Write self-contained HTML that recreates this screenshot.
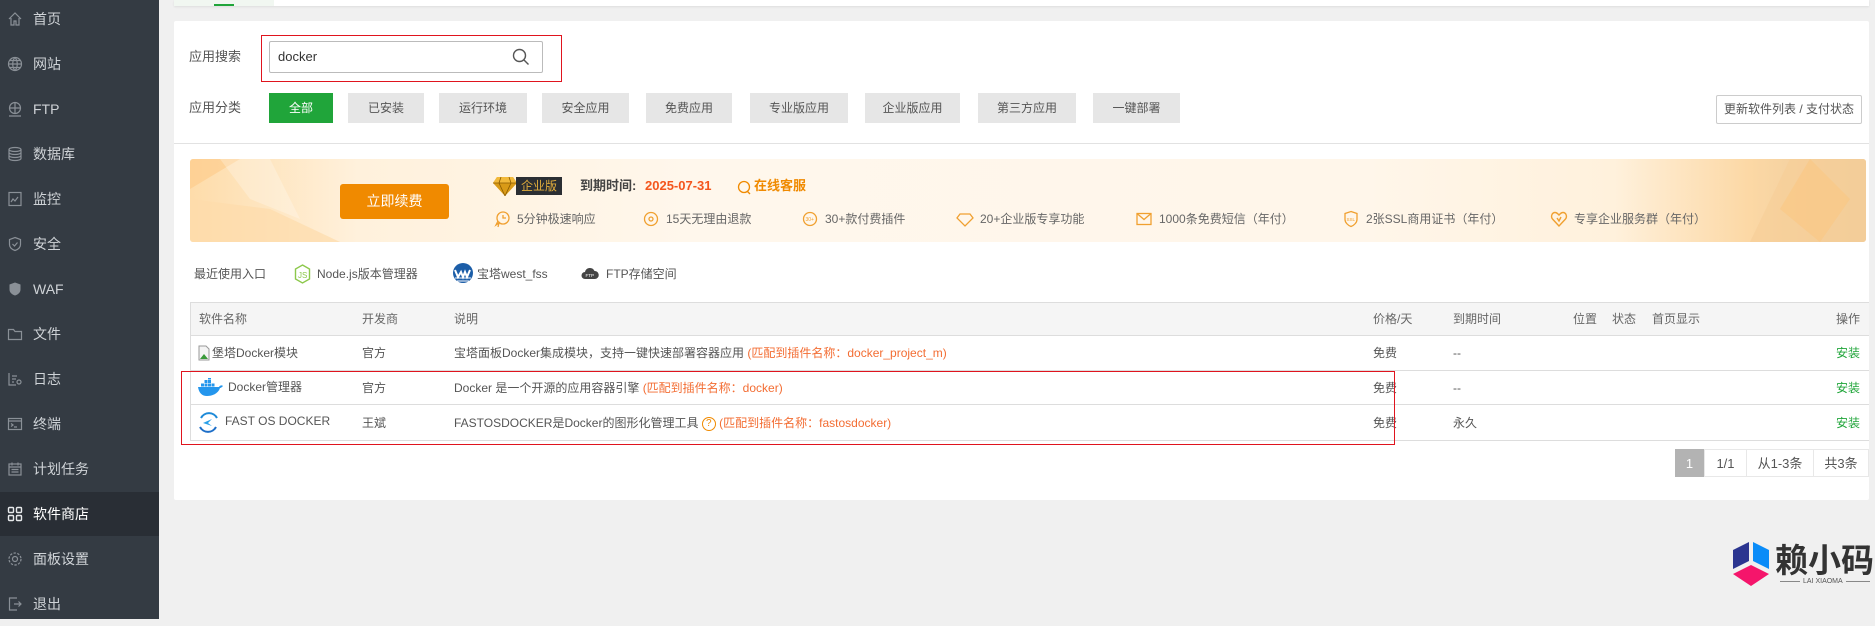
<!DOCTYPE html>
<html><head><meta charset="utf-8"><style>
*{margin:0;padding:0;box-sizing:border-box}
body{width:1875px;height:619px;overflow:hidden;background:#f0f0f0;font-family:"Liberation Sans","Noto Sans CJK SC",sans-serif;font-size:13px;color:#555;position:relative}
.a{position:absolute;white-space:nowrap}
#side{position:absolute;left:0;top:0;width:159px;height:619px;background:#343b43}
.si{position:absolute;left:0;width:159px;height:44px;line-height:44px;color:#cfd3d7;font-size:14px}
.si span{position:absolute;left:33px}
.si svg{position:absolute;left:7px;top:14px}
.si.act{background:#292e35;color:#fff}
.btn{position:absolute;top:93px;height:30px;line-height:30px;background:#e6e6e6;color:#555;text-align:center;font-size:12px}
.th{position:absolute;top:302px;height:34px;line-height:34px;color:#666;font-size:12px}
.row{position:absolute;left:190px;width:1679px;border-bottom:1px solid #ddd;height:35px}
.td{position:absolute;line-height:34px;font-size:12px;color:#555;white-space:nowrap}
.or{color:#f36d33}
.gr{color:#20a53a}
.ft{position:absolute;top:210px;font-size:12px;color:#666;white-space:nowrap;line-height:18px}
.ft svg{position:absolute;left:-24px;top:0}
.pg{position:absolute;top:449px;height:28px;line-height:28px;text-align:center;border:1px solid #e8e8e8;font-size:13px;color:#555;background:#fff}
</style></head><body>
<div id="side">
<div class="si" style="top:-3px"><svg width="16" height="16" viewBox="0 0 16 16" fill="none" stroke="#8a9097" stroke-width="1.2"><path d="M2 8L8 2l6 6M4 7v7h3v-4h2v4h3V7"/></svg><span>首页</span></div>
<div class="si" style="top:42px"><svg width="16" height="16" viewBox="0 0 16 16" fill="none" stroke="#8a9097" stroke-width="1.2"><circle cx="8" cy="8" r="6.5"/><path d="M1.5 8h13M8 1.5c-3 3-3 10 0 13M8 1.5c3 3 3 10 0 13M3 4.5h10M3 11.5h10"/></svg><span>网站</span></div>
<div class="si" style="top:87px"><svg width="16" height="16" viewBox="0 0 16 16" fill="none" stroke="#8a9097" stroke-width="1.2"><circle cx="8" cy="7" r="5.5"/><path d="M2.5 7h11M8 1.5v11M2 15h12"/></svg><span>FTP</span></div>
<div class="si" style="top:132px"><svg width="16" height="16" viewBox="0 0 16 16" fill="none" stroke="#8a9097" stroke-width="1.2"><ellipse cx="8" cy="3.5" rx="6" ry="2"/><path d="M2 3.5v9c0 1.1 2.7 2 6 2s6-.9 6-2v-9M2 6.5c0 1.1 2.7 2 6 2s6-.9 6-2M2 9.5c0 1.1 2.7 2 6 2s6-.9 6-2"/></svg><span>数据库</span></div>
<div class="si" style="top:177px"><svg width="16" height="16" viewBox="0 0 16 16" fill="none" stroke="#8a9097" stroke-width="1.2"><rect x="2" y="1.5" width="12" height="13"/><path d="M4 11l2-3 2 2 3-4"/></svg><span>监控</span></div>
<div class="si" style="top:222px"><svg width="16" height="16" viewBox="0 0 16 16" fill="none" stroke="#8a9097" stroke-width="1.2"><path d="M8 1.5l5.5 2v5c0 3-2.5 5-5.5 6-3-1-5.5-3-5.5-6v-5z M5.5 8l2 2 3-3.5"/></svg><span>安全</span></div>
<div class="si" style="top:267px"><svg width="16" height="16" viewBox="0 0 16 16"><path d="M8 1.5l5.5 2v5c0 3-2.5 5-5.5 6-3-1-5.5-3-5.5-6v-5z" fill="#8a9097"/></svg><span>WAF</span></div>
<div class="si" style="top:312px"><svg width="16" height="16" viewBox="0 0 16 16" fill="none" stroke="#8a9097" stroke-width="1.2"><path d="M1.5 3.5h5l1.5 2h6.5v8h-13z"/></svg><span>文件</span></div>
<div class="si" style="top:357px"><svg width="16" height="16" viewBox="0 0 16 16" fill="none" stroke="#8a9097" stroke-width="1.2"><path d="M2 2v12h7M5 5h5M5 8h4M5 11h2"/><circle cx="12" cy="11" r="2"/></svg><span>日志</span></div>
<div class="si" style="top:402px"><svg width="16" height="16" viewBox="0 0 16 16" fill="none" stroke="#8a9097" stroke-width="1.2"><rect x="1.5" y="2.5" width="13" height="11"/><path d="M1.5 5h13M4 7.5l2 1.5-2 1.5M7 11h3"/></svg><span>终端</span></div>
<div class="si" style="top:447px"><svg width="16" height="16" viewBox="0 0 16 16" fill="none" stroke="#8a9097" stroke-width="1.2"><rect x="2" y="3" width="12" height="11"/><path d="M2 6h12M5 1.5v3M11 1.5v3M4.5 8.5h7M4.5 11h7"/></svg><span>计划任务</span></div>
<div class="si act" style="top:492px"><svg width="16" height="16" viewBox="0 0 16 16" fill="none" stroke="#e8eaec" stroke-width="1.4"><rect x="1.5" y="1.5" width="5" height="5" rx="1"/><rect x="9.5" y="1.5" width="5" height="5" rx="1"/><rect x="1.5" y="9.5" width="5" height="5" rx="1"/><rect x="9.5" y="9.5" width="5" height="5" rx="1"/></svg><span>软件商店</span></div>
<div class="si" style="top:537px"><svg width="16" height="16" viewBox="0 0 16 16" fill="none" stroke="#8a9097" stroke-width="1.2"><circle cx="8" cy="8" r="2.5"/><circle cx="8" cy="8" r="6" stroke-dasharray="2.4 1.4"/></svg><span>面板设置</span></div>
<div class="si" style="top:582px"><svg width="16" height="16" viewBox="0 0 16 16" fill="none" stroke="#8a9097" stroke-width="1.2"><path d="M10 2H2.5v12H10M7 8h7M11.5 5.5L14 8l-2.5 2.5"/></svg><span>退出</span></div>
</div>

<!-- top tab card -->
<div class="a" style="left:174px;top:0;width:1695px;height:6px;background:#fff;box-shadow:0 1px 2px rgba(0,0,0,.08)"></div>
<div class="a" style="left:174px;top:0;width:100px;height:6px;background:#f1f7f1"></div>
<div class="a" style="left:214px;top:4px;width:20px;height:2px;background:#20a53a"></div>

<!-- main card -->
<div class="a" style="left:174px;top:21px;width:1695px;height:479px;background:#fff;border-radius:2px"></div>
<div class="a" style="left:189px;top:47px;font-size:13px;color:#555;line-height:20px">应用搜索</div>
<div class="a" style="left:261px;top:35px;width:301px;height:47px;border:1px solid #e0141e"></div>
<div class="a" style="left:269px;top:41px;width:274px;height:32px;border:1px solid #bbb;border-radius:2px"></div>
<div class="a" style="left:278px;top:47px;font-size:13px;color:#333;line-height:20px">docker</div>
<svg class="a" style="left:512px;top:48px" width="18" height="18" viewBox="0 0 18 18" fill="none" stroke="#555" stroke-width="1.4"><circle cx="7.5" cy="7.5" r="6"/><path d="M12 12l4.5 4.5"/></svg>

<div class="a" style="left:189px;top:98px;font-size:13px;color:#555;line-height:20px">应用分类</div>
<div class="btn" style="left:269px;width:64px;background:#20a53a;color:#fff">全部</div>
<div class="btn" style="left:348px;width:76px">已安装</div>
<div class="btn" style="left:439px;width:88px">运行环境</div>
<div class="btn" style="left:542px;width:87px">安全应用</div>
<div class="btn" style="left:646px;width:86px">免费应用</div>
<div class="btn" style="left:750px;width:98px">专业版应用</div>
<div class="btn" style="left:865px;width:95px">企业版应用</div>
<div class="btn" style="left:978px;width:98px">第三方应用</div>
<div class="btn" style="left:1093px;width:87px">一键部署</div>
<div class="a" style="left:1716px;top:95px;width:146px;height:29px;line-height:27px;border:1px solid #ccc;border-radius:2px;text-align:center;font-size:12px;color:#555">更新软件列表 / 支付状态</div>
<div class="a" style="left:174px;top:143px;width:1695px;height:1px;background:#e2e2e2"></div>

<!-- banner -->
<div class="a" style="left:190px;top:159px;width:1676px;height:83px;border-radius:3px;background:linear-gradient(90deg,#fedcaa 0%,#fff1dc 10%,#fff7ec 30%,#fff6ea 70%,#fff1dc 85%,#fcd8a5 93%,#e9c89a 100%);overflow:hidden">
<svg width="1676" height="83" style="position:absolute;left:0;top:0"><polygon points="0,0 50,0 0,30" fill="#fec987" opacity=".6"/><polygon points="0,40 80,50 150,83 0,83" fill="#fedcab" opacity=".7"/><polygon points="30,0 80,0 110,60 60,40" fill="#fff" opacity=".25"/><polygon points="1600,0 1676,0 1676,83 1560,83" fill="#f7cf98" opacity=".7"/><polygon points="1620,0 1660,40 1630,83 1590,50" fill="#fcc57e" opacity=".5"/></svg>
</div>
<div class="a" style="left:340px;top:184px;width:109px;height:35px;background:#f08a00;border-radius:3px;color:#fff;text-align:center;line-height:35px;font-size:14px">立即续费</div>
<svg class="a" style="left:493px;top:177px" width="24" height="19" viewBox="0 0 24 19"><polygon points="4,0 20,0 24,6 12,19 0,6" fill="#d99a17"/><polygon points="4,0 20,0 24,6 0,6" fill="#f2b93a"/><path d="M0 6h24M8 0l-2 6 6 13 6-13-2-6" stroke="#8a5a00" stroke-width=".8" fill="none"/></svg>
<div class="a" style="left:516px;top:177px;width:46px;height:18px;background:#2b2e33;color:#e0ac3c;font-size:12px;line-height:18px;text-align:center">企业版</div>
<div class="a" style="left:580px;top:176px;font-size:13px;color:#444;font-weight:bold;line-height:20px">到期时间:</div>
<div class="a" style="left:645px;top:176px;font-size:13px;color:#f4561d;font-weight:bold;line-height:20px">2025-07-31</div>
<svg class="a" style="left:737px;top:180px" width="15" height="15" viewBox="0 0 15 15" fill="none" stroke="#f08a00" stroke-width="1.3"><circle cx="7" cy="7" r="5.5"/><path d="M10 11l3 3"/></svg>
<div class="a" style="left:754px;top:176px;font-size:13px;color:#f08a00;font-weight:bold;line-height:20px">在线客服</div>

<div class="ft" style="left:517px"><svg width="18" height="18" viewBox="0 0 18 18" fill="none" stroke="#f0a030" stroke-width="1.3"><circle cx="10" cy="8" r="6"/><path d="M10 5v3h3M5 11l-2 4 3-2-1 4"/></svg>5分钟极速响应</div>
<div class="ft" style="left:666px"><svg width="18" height="18" viewBox="0 0 18 18" fill="none" stroke="#f0a030" stroke-width="1.3"><circle cx="9" cy="9" r="6.5"/><circle cx="9" cy="9" r="2"/></svg>15天无理由退款</div>
<div class="ft" style="left:825px"><svg width="18" height="18" viewBox="0 0 18 18" fill="none" stroke="#f0a030" stroke-width="1.3"><circle cx="9" cy="9" r="6.5"/><text x="4.5" y="11" font-size="5" fill="#f0a030" stroke="none">30+</text></svg>30+款付费插件</div>
<div class="ft" style="left:980px"><svg width="18" height="18" viewBox="0 0 18 18" fill="none" stroke="#f0a030" stroke-width="1.3"><path d="M4 4h10l3 4-8 8-8-8z"/></svg>20+企业版专享功能</div>
<div class="ft" style="left:1159px"><svg width="18" height="18" viewBox="0 0 18 18" fill="none" stroke="#f0a030" stroke-width="1.3"><rect x="2" y="3.5" width="14" height="11"/><path d="M2 3.5l7 6 7-6"/></svg>1000条免费短信（年付）</div>
<div class="ft" style="left:1366px"><svg width="18" height="18" viewBox="0 0 18 18" fill="none" stroke="#f0a030" stroke-width="1.3"><path d="M9 1.5l6 2v6c0 3-3 6-6 7-3-1-6-4-6-7v-6z"/><text x="4.5" y="11" font-size="4.5" fill="#f0a030" stroke="none">SSL</text></svg>2张SSL商用证书（年付）</div>
<div class="ft" style="left:1574px"><svg width="18" height="18" viewBox="0 0 18 18" fill="none" stroke="#f0a030" stroke-width="1.4"><path d="M9 16L2.5 9C.5 6.5 2 2.5 5 2.5c2 0 3 1.5 4 2.5 1-1 2-2.5 4-2.5 3 0 4.5 4 2.5 6.5zM7 8l2 3 2-4"/></svg>专享企业服务群（年付）</div>

<!-- recent -->
<div class="a" style="left:194px;top:265px;font-size:12px;color:#555;line-height:18px">最近使用入口</div>
<svg class="a" style="left:294px;top:264px" width="17" height="20" viewBox="0 0 17 20"><path d="M8.5 1l7 4v10l-7 4-7-4V5z" fill="none" stroke="#8cc84b" stroke-width="1.4"/><text x="4" y="14" font-size="8" fill="#8cc84b" font-family="Liberation Sans">JS</text></svg>
<div class="a" style="left:317px;top:265px;font-size:12px;color:#555;line-height:18px">Node.js版本管理器</div>
<svg class="a" style="left:452px;top:262px" width="22" height="22" viewBox="0 0 22 22"><circle cx="11" cy="11" r="10" fill="#1c5ea8"/><path d="M3 8l3 7 3-5 2 5 2-5 2 5 3-7" stroke="#fff" stroke-width="2" fill="none"/><path d="M3 16h16M5 19h12" stroke="#fff" stroke-width="1"/></svg>
<div class="a" style="left:477px;top:265px;font-size:12px;color:#555;line-height:18px">宝塔west_fss</div>
<svg class="a" style="left:581px;top:266px" width="18" height="14" viewBox="0 0 18 14"><path d="M4 13a3.5 3.5 0 010-7 5 5 0 019.5-1A4 4 0 0114 13z" fill="#444"/><text x="4.5" y="11" font-size="4.5" fill="#fff" font-family="Liberation Sans">FTP</text></svg>
<div class="a" style="left:606px;top:265px;font-size:12px;color:#555;line-height:18px">FTP存储空间</div>

<!-- table -->
<div class="a" style="left:190px;top:302px;width:1679px;height:139px;border:1px solid #ddd;border-right:none"></div>
<div class="a" style="left:191px;top:303px;width:1678px;height:33px;background:#f5f5f5;border-bottom:1px solid #ddd"></div>
<div class="th" style="left:199px">软件名称</div>
<div class="th" style="left:362px">开发商</div>
<div class="th" style="left:454px">说明</div>
<div class="th" style="left:1373px">价格/天</div>
<div class="th" style="left:1453px">到期时间</div>
<div class="th" style="left:1573px">位置</div>
<div class="th" style="left:1612px">状态</div>
<div class="th" style="left:1652px">首页显示</div>
<div class="th" style="left:1836px">操作</div>
<div class="a" style="left:191px;top:370px;width:1678px;height:1px;background:#ddd"></div>
<div class="a" style="left:191px;top:404px;width:1678px;height:1px;background:#ddd"></div>

<svg class="a" style="left:198px;top:345px" width="12" height="16" viewBox="0 0 12 16"><path d="M1 1h7l3 3v11H1z" fill="#f4f4f4" stroke="#999"/><path d="M2 14l4-5 4 5z" fill="#3a9a3a"/></svg>
<div class="td" style="left:212px;top:336px">堡塔Docker模块</div>
<div class="td" style="left:362px;top:336px">官方</div>
<div class="td" style="left:454px;top:336px">宝塔面板Docker集成模块，支持一键快速部署容器应用 <span class="or">(匹配到插件名称：docker_project_m)</span></div>
<div class="td" style="left:1373px;top:336px">免费</div>
<div class="td" style="left:1453px;top:336px">--</div>
<div class="td gr" style="left:1836px;top:336px">安装</div>

<svg class="a" style="left:197px;top:378px" width="26" height="19" viewBox="0 0 26 19"><path d="M1 9h21c1-2 3-2 4-1-1 1-2 2-3 2-2 6-8 8-13 8C5 18 2 15 1 9z" fill="#2496ed"/><g fill="#2496ed"><rect x="4" y="5.5" width="3" height="3"/><rect x="7.5" y="5.5" width="3" height="3"/><rect x="11" y="5.5" width="3" height="3"/><rect x="14.5" y="5.5" width="3" height="3"/><rect x="7.5" y="2" width="3" height="3"/><rect x="11" y="2" width="3" height="3"/><rect x="11" y="-1.5" width="3" height="3"/></g></svg>
<div class="td" style="left:228px;top:370px">Docker管理器</div>
<div class="td" style="left:362px;top:371px">官方</div>
<div class="td" style="left:454px;top:371px">Docker 是一个开源的应用容器引擎 <span class="or">(匹配到插件名称：docker)</span></div>
<div class="td" style="left:1373px;top:371px">免费</div>
<div class="td" style="left:1453px;top:371px">--</div>
<div class="td gr" style="left:1836px;top:371px">安装</div>

<svg class="a" style="left:197px;top:412px" width="23" height="21" viewBox="0 0 23 21" fill="none"><path d="M4 6a9 9 0 0116 0" stroke="#1d8ad8" stroke-width="2"/><path d="M19 15a9 9 0 01-16 0" stroke="#1d6ec8" stroke-width="2"/><path d="M15 7l-9 4 9 3-4-3z" fill="#2aa0e8"/></svg>
<div class="td" style="left:225px;top:404px">FAST OS DOCKER</div>
<div class="td" style="left:362px;top:406px">王斌</div>
<div class="td" style="left:454px;top:406px">FASTOSDOCKER是Docker的图形化管理工具 <span style="display:inline-block;width:14px;height:14px;border:1px solid #f08a00;border-radius:50%;color:#f08a00;font-size:10px;line-height:12px;text-align:center;vertical-align:middle">?</span> <span class="or">(匹配到插件名称：fastosdocker)</span></div>
<div class="td" style="left:1373px;top:406px">免费</div>
<div class="td" style="left:1453px;top:406px">永久</div>
<div class="td gr" style="left:1836px;top:406px">安装</div>

<div class="a" style="left:181px;top:371px;width:1214px;height:74px;border:1px solid #e0141e"></div>

<!-- pagination -->
<div class="pg" style="left:1675px;width:29px;background:#b3b3b3;border-color:#b3b3b3;color:#fff">1</div>
<div class="pg" style="left:1704px;width:43px">1/1</div>
<div class="pg" style="left:1746px;width:68px">从1-3条</div>
<div class="pg" style="left:1813px;width:56px">共3条</div>

<!-- watermark -->
<svg class="a" style="left:1731px;top:541px" width="40" height="46" viewBox="0 0 40 46"><path d="M18 1L2 9v19l16-8z" fill="#2b3590"/><path d="M22 1l16 8v19L22 20z" fill="#0a8cf8"/><path d="M2 33l18-9 18 9-18 12z" fill="#f5156b"/></svg>
<div class="a" style="left:1775px;top:538px;font-size:33px;font-weight:bold;color:#333;line-height:40px;font-family:'Noto Sans CJK SC',sans-serif">赖小码</div>
<div class="a" style="left:1780px;top:581px;width:90px;height:1px;background:#888"></div>
<div class="a" style="left:1800px;top:577px;background:#f0f0f0;padding:0 3px;font-size:7px;color:#555;line-height:9px">LAI XIAOMA</div>
</body></html>
